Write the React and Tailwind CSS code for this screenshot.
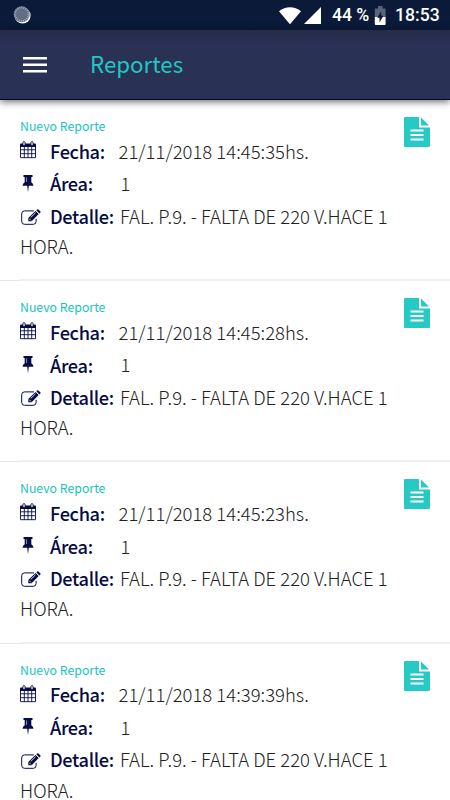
const reports = [
  { id: 1, date: '21/11/2018 14:45:35hs.', area: '1' },
  { id: 2, date: '21/11/2018 14:45:28hs.', area: '1' },
  { id: 3, date: '21/11/2018 14:45:23hs.', area: '1' },
  { id: 4, date: '21/11/2018 14:39:39hs.', area: '1' },
];

const CalendarIcon = () => (
  <svg viewBox="0 0 16 18" className="w-4 h-[18px] -mt-[3px] mr-[2px]">
    <path d="M.5 4.5v12.2h15V4.5M.5 8.8h15M.5 12.7h15M4.3 6v11M8 6v11M11.7 6v11" fill="none" stroke="currentColor" strokeWidth=".9" />
    <path d="M0 3.4q0-1 1-1h14q1 0 1 1V6H0z" fill="currentColor" />
    <rect x="2.9" y="0.6" width="2.2" height="4" rx="1.1" fill="#fff" stroke="currentColor" strokeWidth=".9" />
    <rect x="10.9" y="0.6" width="2.2" height="4" rx="1.1" fill="#fff" stroke="currentColor" strokeWidth=".9" />
  </svg>
);

const PinIcon = () => (
  <svg viewBox="0 0 12 18" className="w-3 h-[18px] -mt-px ml-[2px] mr-1" fill="currentColor">
    <path d="M1.5 0H10.5V2H9.3V7.2Q11.3 8.2 11.5 10.7H6.8L6 17.3L5.2 10.7H.5Q.7 8.2 2.7 7.2V2H1.5z" />
    <path d="M4.6 2.4V7" stroke="#9a9eb8" strokeWidth=".9" />
  </svg>
);

const EditIcon = () => (
  <svg viewBox="0 0 20 16" className="w-5 h-4 ml-px -mr-px mt-px">
    <path d="M13 1.9H3.5Q.7 1.9.7 4.7v7.8q0 2.8 2.8 2.8h8.8q2.8 0 2.8-2.8V9.8" fill="none" stroke="currentColor" strokeWidth="1" />
    <path d="M7.3 12.2V8.9L14.5 1.9L17.7 5.1L10.6 12.2z" fill="currentColor" />
    <path d="M15.3 1.2L16.2.4q.6-.5 1.2 0l1.9 1.9q.5.6 0 1.2l-.9.9z" fill="currentColor" />
    <path d="M9.7 8.5L14.5 3.8M8.2 9.7L9.9 11.4" stroke="#fff" strokeWidth=".8" />
  </svg>
);

const StatusBar = () => (
  <div className="h-[30px] bg-[#0b1a38] flex items-center text-white font-['Roboto',sans-serif] font-medium">
    <svg viewBox="0 0 18 18" className="w-[18px] h-[18px] ml-[13px]">
      <circle cx="9.6" cy="9.6" r="8" fill="#fff" />
      <circle cx="8.7" cy="8.3" r="8" fill="#626d86" />
      <circle cx="8.7" cy="8.3" r="6.8" fill="none" stroke="#a3a9b7" strokeWidth="2" strokeDasharray="1 1.1" />
    </svg>
    <svg viewBox="0 0 22 17" className="w-[22px] h-[17px] ml-auto" fill="#fff">
      <path d="M0 4.2C6.5-1.2 15.5-1.2 22 4.2L11 17.3z" />
    </svg>
    <svg viewBox="0 0 17 17" className="w-[17px] h-[17px] ml-[3px] mt-px" fill="#fff">
      <path d="M17 0v17H0z" />
    </svg>
    <span className="text-[17.6px] leading-none ml-[11px] mt-px w-[37px] whitespace-nowrap">44 %</span>
    <svg viewBox="0 0 12 19" className="w-3 h-[19px] ml-[5px]">
      <path d="M.8 2.5H4V0h4.6v2.5H11.6V11H.8z" fill="#59637b" />
      <path d="M.8 11H11.6v7q0 1-1 1H1.8q-1 0-1-1z" fill="#fff" />
      <path d="M7.2 5.2L3.2 11.8H5.5V16.4L9.4 9.7H7.2z" fill="#0b1a38" />
    </svg>
    <span className="text-[17.6px] leading-none ml-[9px] mt-px mr-[10px] w-[45px] whitespace-nowrap">18:53</span>
  </div>
);

const Header = () => (
  <header className="relative h-[70px] bg-gradient-to-b from-[#252b49] to-[#293155] to-20% border-b border-[#02042e] flex items-center shadow-[0_2px_7px_rgba(0,0,0,0.55)]">
    <button className="ml-[23px] w-6">
      <svg viewBox="0 0 24 16" className="w-6 h-4" fill="#fff">
        <path d="M0 0h24v2.6H0zM0 6.5h24v2.6H0zM0 13h24v2.6H0z" />
      </svg>
    </button>
    <h1 className="ml-[43px] -mt-[3px] text-[22.3px] leading-none text-[#22c7c1]">Reportes</h1>
  </header>
);

const ReportItem = ({ report }) => (
  <li className="relative h-[181.2px] px-5 pt-4 text-[18.5px] font-light text-[#222]">
    <p className="h-5 leading-5 text-[12.3px] font-normal text-[#18c4bd]">Nuevo Reporte</p>
    <div className="flex items-center h-[31px] text-[#050b45]">
      <CalendarIcon />
      <b className="ml-3 w-[68.5px] text-[18.2px] tracking-[-0.35px] font-medium">Fecha:</b>
      <span className="text-[#222] whitespace-nowrap">{report.date}</span>
    </div>
    <div className="flex items-center h-[34px] text-[#050b45]">
      <PinIcon />
      <b className="ml-3 w-[70.5px] text-[18.2px] tracking-[-0.35px] font-medium">Área:</b>
      <span className="text-[#222]">{report.area}</span>
    </div>
    <div className="flex items-center h-[31px] text-[#050b45]">
      <EditIcon />
      <b className="ml-[10px] w-[70px] text-[18.2px] tracking-[-0.35px] font-medium">Detalle:</b>
      <span className="text-[#222] whitespace-nowrap">FAL. P.9. - FALTA DE 220 V.HACE 1</span>
    </div>
    <p className="h-[29px] leading-[29px]">HORA.</p>

    {/* document badge */}
    <svg viewBox="0 0 26 30" className="absolute left-[404px] top-[17px] w-[26px] h-[30px]">
      <path d="M1 0H15V10.5H26V29q0 1-1 1H1q-1 0-1-1V1q0-1 1-1z" fill="#26c9c3" />
      <path d="M17 0.5L25 8.5H17z" fill="#26c9c3" />
      <path d="M6.5 13.5h13M6.5 18h13M6.5 22.6h13" stroke="#fff" strokeWidth="2" />
    </svg>
    <span className="absolute left-0 bottom-0 w-5 h-px bg-[#e6e6e6]" />
    <span className="absolute left-5 right-0 bottom-0 h-[2px] bg-[#efefef]" />
  </li>
);

const App = () => (
  <div className="h-screen overflow-hidden bg-white font-['Noto_Sans_CJK_JP',sans-serif]">
    <StatusBar />
    <Header />
    <ul>
      {reports.map(report => (
        <ReportItem key={report.id} report={report} />
      ))}
    </ul>
  </div>
);

export default App;
